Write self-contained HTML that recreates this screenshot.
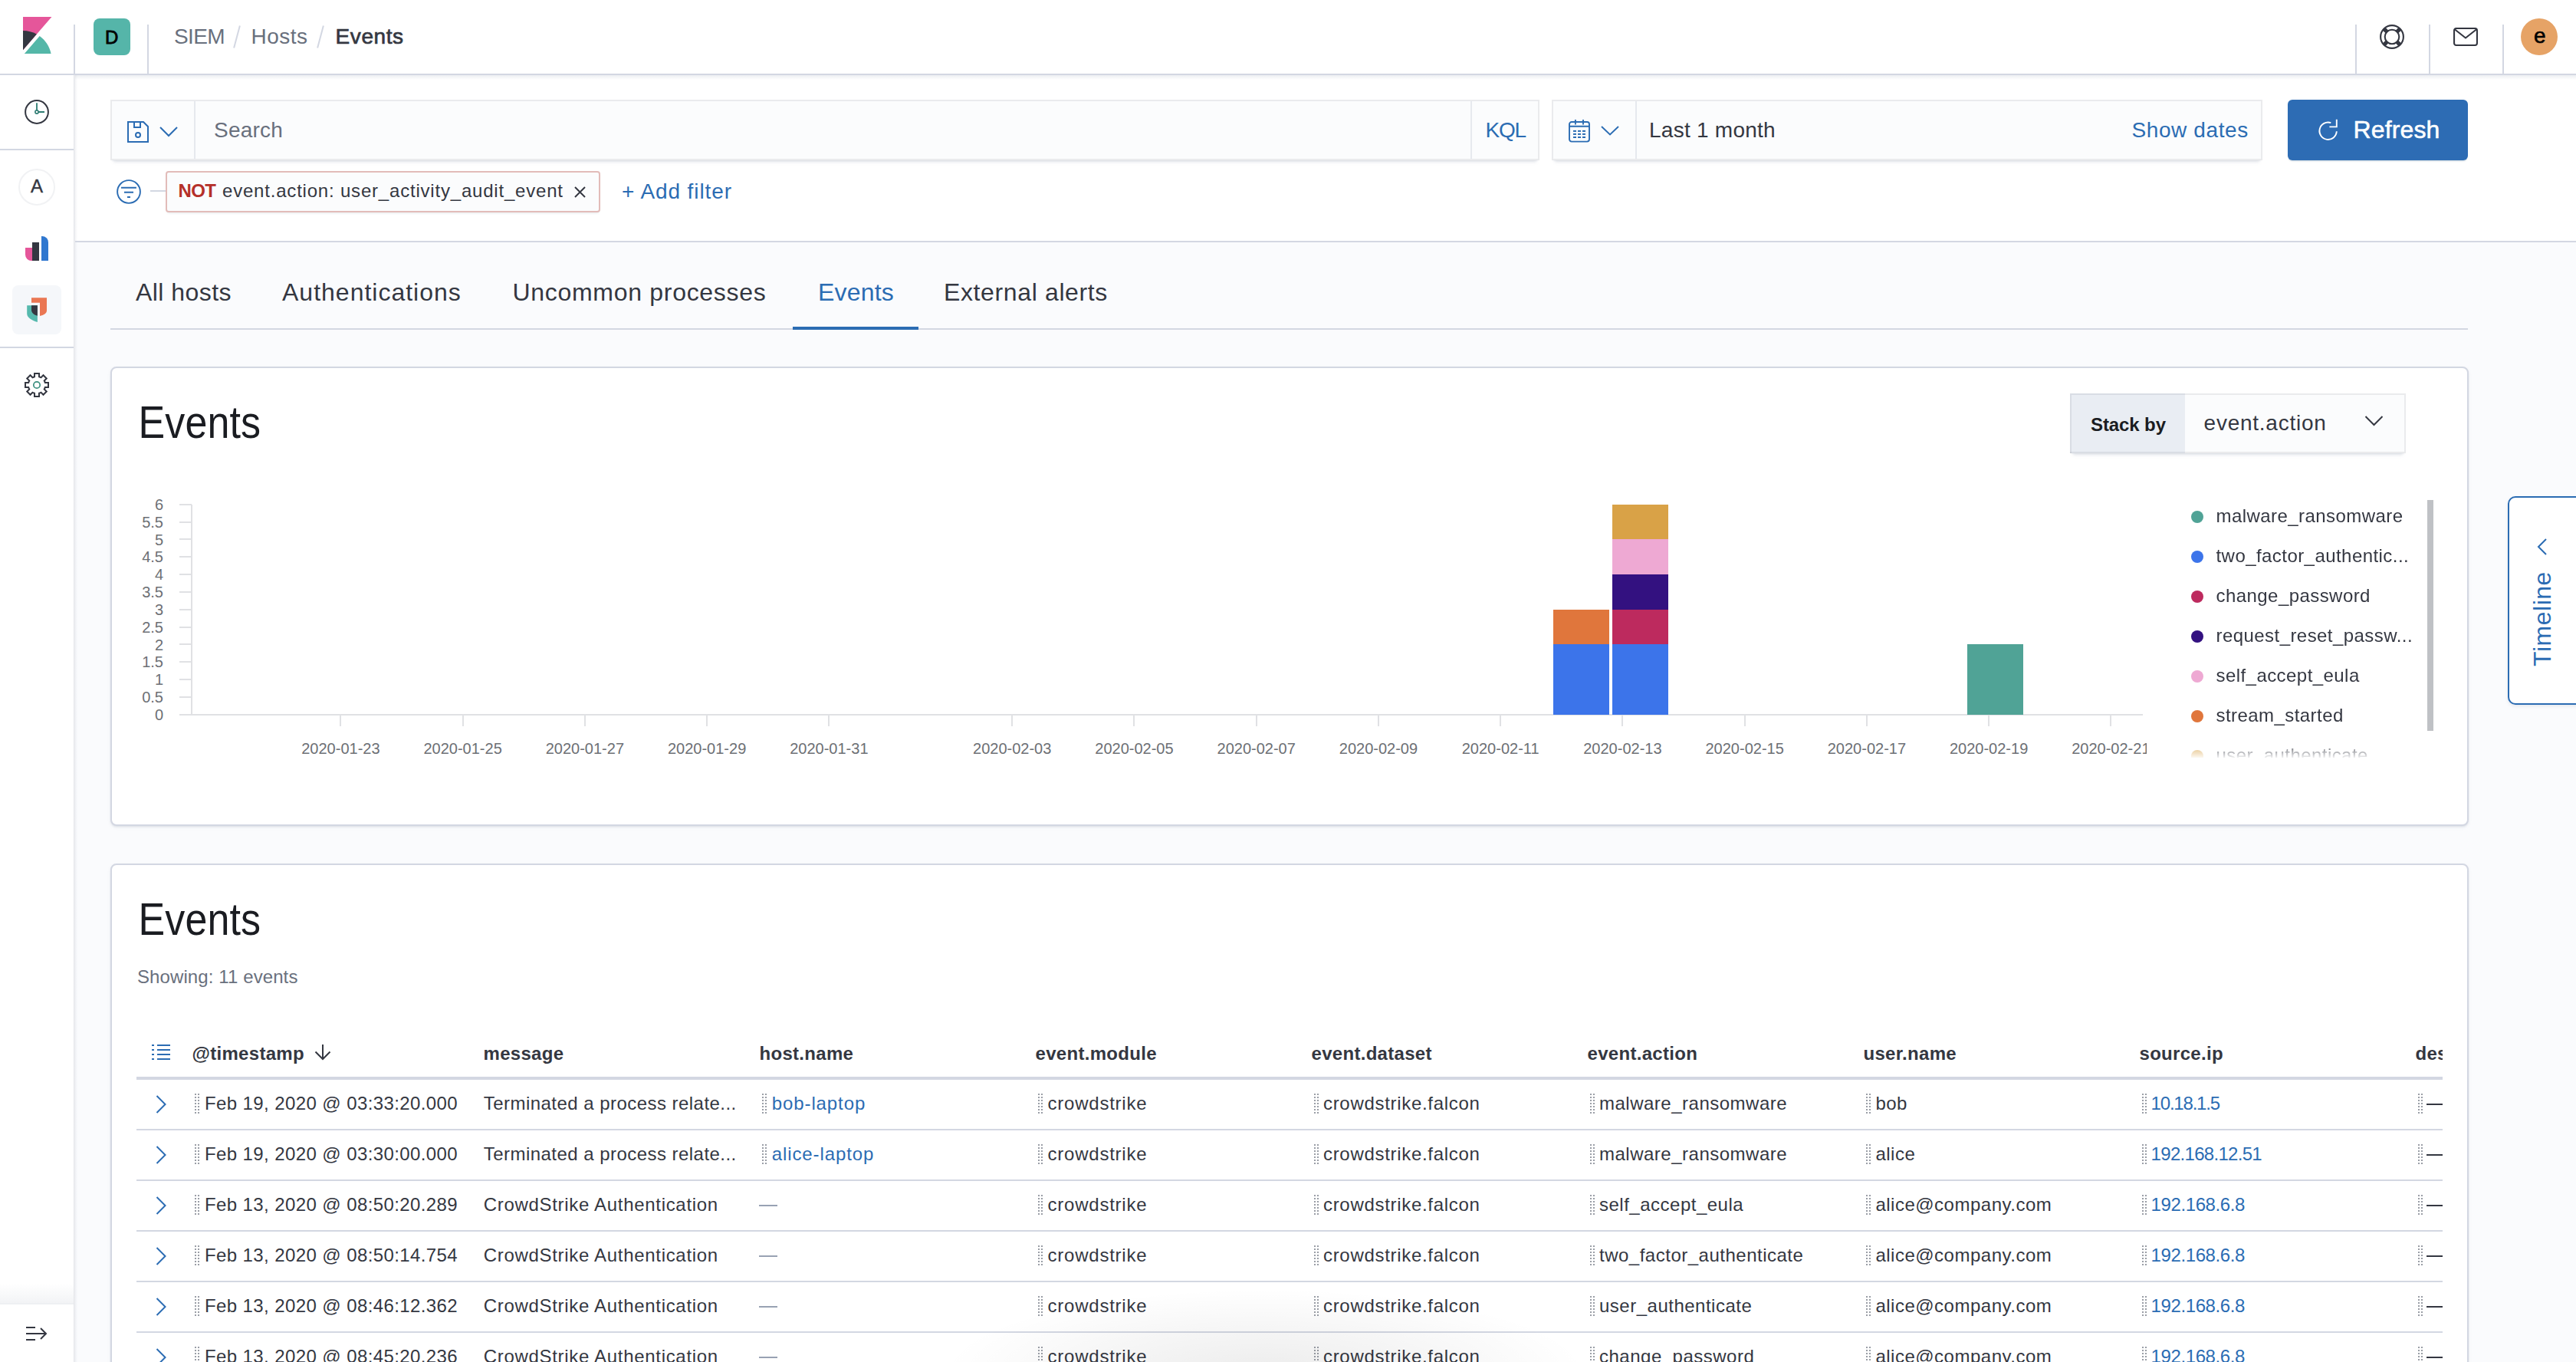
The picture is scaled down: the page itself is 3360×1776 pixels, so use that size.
<!DOCTYPE html>
<html><head><meta charset="utf-8"><title>Events - SIEM</title>
<style>
html,body{margin:0;padding:0;width:3360px;height:1776px;overflow:hidden;background:#fff;position:relative}
body{font-family:"Liberation Sans", sans-serif;}
.t{position:absolute;line-height:1;white-space:nowrap}
svg{overflow:visible}
@media (max-width:1700px){html{zoom:0.5}}
</style></head><body>
<div style="position:absolute;left:98.00px;top:314.00px;width:3262.00px;height:1462.00px;background:#FAFBFD"></div>
<div style="position:absolute;left:0.00px;top:0.00px;width:3360.00px;height:96.00px;background:#fff"></div>
<div style="position:absolute;left:0.00px;top:96.00px;width:3360.00px;height:2.00px;background:#D3D7E2"></div>
<div style="position:absolute;left:98.00px;top:98.00px;width:3262.00px;height:6.00px;background:linear-gradient(rgba(152,162,179,0.18),rgba(152,162,179,0))"></div>
<div style="position:absolute;left:96.00px;top:32.00px;width:2.00px;height:64.00px;background:#D3D7E2"></div>
<div style="position:absolute;left:192.00px;top:32.00px;width:2.00px;height:64.00px;background:#D3D7E2"></div>
<div style="position:absolute;left:3072.00px;top:32.00px;width:2.00px;height:64.00px;background:#D3D7E2"></div>
<div style="position:absolute;left:3168.00px;top:32.00px;width:2.00px;height:64.00px;background:#D3D7E2"></div>
<div style="position:absolute;left:3264.00px;top:32.00px;width:2.00px;height:64.00px;background:#D3D7E2"></div>
<svg style="position:absolute;left:24.00px;top:22.00px;" width="48" height="48" viewBox="0 0 32 32"><path fill="#E5569A" d="M4 0v28.789L28.935.017z"/><path fill="#343741" d="M4 12v16.789l11.906-13.738A24.721 24.721 0 0 0 4 12"/><path fill="#54B7A8" d="M18.479 16.664L6.268 30.754l-1.073 1.237h23.191c-1.252-6.292-4.883-11.719-9.908-15.327"/></svg>
<div style="position:absolute;left:122.00px;top:24.00px;width:48.00px;height:48.00px;background:#55B5A9;border-radius:8px"></div>
<div class="t" style="left:137.00px;top:36.68px;font-size:24px;color:#000;font-weight:400;letter-spacing:0px;-webkit-text-stroke:0.8px #000">D</div>
<div class="t" style="left:227.00px;top:34.30px;font-size:28px;color:#69707D;font-weight:400;letter-spacing:-0.6px;">SIEM</div>
<div style="position:absolute;left:308.00px;top:33.00px;width:2.00px;height:30.00px;background:#D3D7E2;transform:rotate(15deg)"></div>
<div class="t" style="left:327.50px;top:34.30px;font-size:28px;color:#69707D;font-weight:400;letter-spacing:0.5px;">Hosts</div>
<div style="position:absolute;left:417.00px;top:33.00px;width:2.00px;height:30.00px;background:#D3D7E2;transform:rotate(15deg)"></div>
<div class="t" style="left:437.50px;top:34.30px;font-size:28px;color:#343741;font-weight:400;letter-spacing:0.6px;-webkit-text-stroke:0.7px #343741">Events</div>
<svg style="position:absolute;left:3104.00px;top:32.00px;" width="32" height="32" viewBox="0 0 32 32"><g fill="none" stroke="#343741" stroke-width="2.1"><circle cx="16" cy="16" r="14.9"/><circle cx="16" cy="16" r="9.3"/></g><g stroke="#343741" stroke-width="5.2" fill="none"><path d="M5.6 5.6l4.4 4.4M26.4 5.6l-4.4 4.4M5.6 26.4l4.4-4.4M26.4 26.4l-4.4-4.4"/></g></svg>
<svg style="position:absolute;left:3200.00px;top:36.00px;" width="32" height="24" viewBox="0 0 32 24"><g fill="none" stroke="#343741" stroke-width="2.1"><rect x="1.05" y="1.05" width="29.9" height="21.9" rx="2.6"/><path d="M1.8 2.2l14.2 11.3 14.2-11.3"/></g></svg>
<div style="position:absolute;left:3288.00px;top:24.00px;width:48.00px;height:48.00px;background:#E6A366;border-radius:50%"></div>
<div class="t" style="left:3305.00px;top:33.30px;font-size:28px;color:#000;font-weight:400;letter-spacing:0px;-webkit-text-stroke:0.6px #000">e</div>
<div style="position:absolute;left:0.00px;top:98.00px;width:96.00px;height:1678.00px;background:#fff"></div>
<div style="position:absolute;left:96.00px;top:98.00px;width:5.00px;height:1678.00px;background:linear-gradient(90deg,rgba(140,146,165,0.25),rgba(140,146,165,0.09) 50%,rgba(140,146,165,0))"></div>
<div style="position:absolute;left:0.00px;top:194.00px;width:96.00px;height:2.00px;background:#D3D7E2"></div>
<div style="position:absolute;left:0.00px;top:452.00px;width:96.00px;height:2.00px;background:#D3D7E2"></div>
<svg style="position:absolute;left:32.00px;top:130.00px;" width="32" height="32" viewBox="0 0 32 32"><circle cx="16" cy="16" r="14.9" fill="none" stroke="#343741" stroke-width="2"/><path d="M16 4.3v9.8M18 16h8" stroke="#2F7D73" stroke-width="1.8" fill="none"/><circle cx="16" cy="16" r="2.1" fill="#fff" stroke="#2F7D73" stroke-width="1.6"/></svg>
<div style="position:absolute;left:24.00px;top:220.00px;width:48.00px;height:48.00px;background:#fff;border:2px solid #F1F2F4;border-radius:50%;box-sizing:border-box"></div>
<div class="t" style="left:40.00px;top:231.48px;font-size:24px;color:#343741;font-weight:400;letter-spacing:0px;-webkit-text-stroke:0.4px #343741">A</div>
<svg style="position:absolute;left:32.00px;top:307.00px;" width="32" height="34" viewBox="0 0 32 34"><path fill="#E5569A" d="M1 16h9v17H9a8 8 0 0 1-8-8z"/><rect fill="#343741" x="10" y="9" width="9" height="24"/><path fill="#2F77CF" d="M22 1h1a8 8 0 0 1 8 8v24h-9z"/></svg>
<div style="position:absolute;left:16.00px;top:372.00px;width:64.00px;height:64.00px;background:#F5F7FA;border-radius:8px"></div>
<svg style="position:absolute;left:30.00px;top:383.00px;" width="36" height="42" viewBox="30 383 36 42"><path fill="#EA7753" d="M41 388.2H61V405C61 408.5 57 411 52 412V394.7H41Z"/><path fill="#55B9AD" d="M35.2 398.2H48.9V420C42 418 35.2 414.5 35.2 409Z"/><path fill="#343741" d="M41 398.2H48.9V411.7C44.5 410.8 41 408 41 404Z"/></svg>
<svg style="position:absolute;left:32.00px;top:486.00px;" width="32" height="32" viewBox="0 0 32 32"><path fill="none" stroke="#343741" stroke-width="2" stroke-linejoin="miter" d="M13.00 5.21L13.00 1.00L19.00 1.00L19.00 5.21A11.2 11.2 0 0 1 21.51 6.25L24.49 3.27L28.73 7.51L25.75 10.49A11.2 11.2 0 0 1 26.79 13.00L31.00 13.00L31.00 19.00L26.79 19.00A11.2 11.2 0 0 1 25.75 21.51L28.73 24.49L24.49 28.73L21.51 25.75A11.2 11.2 0 0 1 19.00 26.79L19.00 31.00L13.00 31.00L13.00 26.79A11.2 11.2 0 0 1 10.49 25.75L7.51 28.73L3.27 24.49L6.25 21.51A11.2 11.2 0 0 1 5.21 19.00L1.00 19.00L1.00 13.00L5.21 13.00A11.2 11.2 0 0 1 6.25 10.49L3.27 7.51L7.51 3.27L10.49 6.25Z"/><circle cx="16" cy="16" r="4.2" fill="none" stroke="#3B8F7F" stroke-width="1.7"/></svg>
<div style="position:absolute;left:0.00px;top:1674.00px;width:96.00px;height:26.00px;background:linear-gradient(rgba(152,162,179,0),rgba(152,162,179,0.13))"></div>
<div style="position:absolute;left:0.00px;top:1699.00px;width:96.00px;height:2.00px;#EEF0F3;background:#EEF0F3"></div>
<svg style="position:absolute;left:34.00px;top:1729.00px;" width="28" height="20" viewBox="0 0 28 20"><g fill="none" stroke="#343741" stroke-width="2"><path d="M0 2h12M0 10h26M0 18h12M19 3l7 7-7 7"/></g></svg>
<div style="position:absolute;left:144.00px;top:130.00px;width:1864.00px;height:79.00px;background:#FBFCFD;box-shadow:inset 0 0 0 2px rgba(32,38,47,0.08),0 2px 2px -2px rgba(152,162,179,0.3),0 6px 4px -4px rgba(152,162,179,0.3)"></div>
<div style="position:absolute;left:253.00px;top:132.00px;width:2.00px;height:75.00px;background:#E6E9EE"></div>
<div style="position:absolute;left:1918.00px;top:132.00px;width:2.00px;height:75.00px;background:#E6E9EE"></div>
<svg style="position:absolute;left:166.00px;top:158.00px;" width="28" height="28" viewBox="0 0 28 28"><g fill="none" stroke="#2B6CB3" stroke-width="2"><path d="M1 1h20l6 6v20H1z"/><path d="M9 1v7h8V1"/><circle cx="14" cy="18" r="3"/></g></svg>
<svg style="position:absolute;left:208.00px;top:165.00px;" width="24" height="14" viewBox="0 0 24 14"><path d="M1 1l11 11 11-11" fill="none" stroke="#2B6CB3" stroke-width="2"/></svg>
<div class="t" style="left:279.00px;top:155.80px;font-size:28px;color:#69707D;font-weight:400;letter-spacing:0.2px;">Search</div>
<div class="t" style="left:1937.50px;top:156.30px;font-size:28px;color:#2B6CB3;font-weight:400;letter-spacing:-1.2px;">KQL</div>
<div style="position:absolute;left:2024.00px;top:130.00px;width:927.00px;height:79.00px;background:#FBFCFD;box-shadow:inset 0 0 0 2px rgba(32,38,47,0.08),0 2px 2px -2px rgba(152,162,179,0.3),0 6px 4px -4px rgba(152,162,179,0.3)"></div>
<div style="position:absolute;left:2133.00px;top:132.00px;width:2.00px;height:75.00px;background:#E6E9EE"></div>
<svg style="position:absolute;left:2046.00px;top:156.00px;" width="28" height="30" viewBox="0 0 28 30"><g fill="none" stroke="#2B6CB3" stroke-width="1.9"><rect x="1" y="3" width="26" height="25.6" rx="3"/><path d="M1 8.8h26M8.9 0v6.6M19 0v6.6"/></g><g fill="#2B6CB3"><rect x="6" y="13.9" width="4" height="2"/><rect x="12" y="13.9" width="4" height="2"/><rect x="18" y="13.9" width="4" height="2"/><rect x="6" y="17.9" width="4" height="2"/><rect x="12" y="17.9" width="4" height="2"/><rect x="18" y="17.9" width="4" height="2"/><rect x="6" y="22" width="4" height="2"/><rect x="12" y="22" width="4" height="2"/><rect x="18" y="22" width="4" height="2"/></g></svg>
<svg style="position:absolute;left:2088.00px;top:164.00px;" width="24" height="13" viewBox="0 0 24 13"><path d="M1 1l11 10.5 11-10.5" fill="none" stroke="#2B6CB3" stroke-width="1.9"/></svg>
<div class="t" style="left:2151.00px;top:156.30px;font-size:28px;color:#343741;font-weight:400;letter-spacing:0.25px;">Last 1 month</div>
<div class="t" style="left:2780.50px;top:156.30px;font-size:28px;color:#2B6CB3;font-weight:400;letter-spacing:0.6px;">Show dates</div>
<div style="position:absolute;left:2984.00px;top:130.00px;width:235.00px;height:79.00px;background:#2D6CB4;border-radius:6px;box-shadow:0 2px 2px -1px rgba(54,97,126,0.3)"></div>
<svg style="position:absolute;left:3024.00px;top:155.00px;" width="26" height="28" viewBox="0 0 26 28"><g fill="none" stroke="#fff" stroke-width="1.9"><path d="M16.3 5.2A11.2 11.2 0 1 0 23.8 16.3"/><path d="M23.8 0.8V10.4H14.4" stroke-linejoin="miter"/></g></svg>
<div class="t" style="left:3069.50px;top:152.91px;font-size:32px;color:#fff;font-weight:400;letter-spacing:0.13px;-webkit-text-stroke:0.55px #fff">Refresh</div>
<svg style="position:absolute;left:152.00px;top:234.00px;" width="32" height="32" viewBox="0 0 32 32"><g fill="none" stroke="#2B6CB3" stroke-width="1.9"><circle cx="16" cy="16" r="14.9"/><path d="M6 10.8h19.9M10 16.7h12M14 23h4"/></g></svg>
<div style="position:absolute;left:196.00px;top:248.00px;width:21.00px;height:2.00px;background:#D3D7E2"></div>
<div style="position:absolute;left:216.00px;top:222.50px;width:567.00px;height:54.00px;background:#FBFCFD;border:2px solid #E2BCB9;border-radius:4px;box-sizing:border-box;box-shadow:0 3px 3px -2px rgba(152,162,179,0.25)"></div>
<div class="t" style="left:232.50px;top:237.18px;font-size:24px;color:#B5302A;font-weight:700;letter-spacing:-0.6px;">NOT</div>
<div class="t" style="left:290.00px;top:237.18px;font-size:24px;color:#343741;font-weight:400;letter-spacing:0.8px;">event.action: user_activity_audit_event</div>
<svg style="position:absolute;left:749.00px;top:243.00px;" width="15" height="15" viewBox="0 0 15 15"><path d="M1 1l13 13M14 1L1 14" stroke="#343741" stroke-width="2" fill="none"/></svg>
<div class="t" style="left:811.00px;top:236.10px;font-size:28px;color:#2B6CB3;font-weight:400;letter-spacing:0.9px;">+ Add filter</div>
<div style="position:absolute;left:98.00px;top:98.00px;width:3262.00px;height:216.00px;background:#fff;z-index:-1"></div>
<div style="position:absolute;left:98.00px;top:314.00px;width:3262.00px;height:2.00px;background:#D3D7E2"></div>
<div style="position:absolute;left:144.00px;top:428.00px;width:3075.00px;height:2.00px;background:#D3D7E2"></div>
<div class="t" style="left:177.00px;top:365.41px;font-size:32px;color:#343741;font-weight:400;letter-spacing:0.45px;">All hosts</div>
<div class="t" style="left:368.00px;top:365.41px;font-size:32px;color:#343741;font-weight:400;letter-spacing:1.0px;">Authentications</div>
<div class="t" style="left:668.50px;top:365.41px;font-size:32px;color:#343741;font-weight:400;letter-spacing:0.7px;">Uncommon processes</div>
<div class="t" style="left:1067.00px;top:365.41px;font-size:32px;color:#2B6CB3;font-weight:400;letter-spacing:0.2px;">Events</div>
<div class="t" style="left:1231.00px;top:365.41px;font-size:32px;color:#343741;font-weight:400;letter-spacing:0.63px;">External alerts</div>
<div style="position:absolute;left:1034.00px;top:426.00px;width:164.00px;height:4.00px;background:#2B6CB3"></div>
<div style="position:absolute;left:144.00px;top:478.00px;width:3076.00px;height:599.00px;background:#fff;border:2px solid #D3D7E2;border-radius:8px;box-sizing:border-box;box-shadow:0 2px 4px -1px rgba(152,162,179,0.25),0 1px 2px rgba(152,162,179,0.15)"></div>
<div class="t" style="left:180.50px;top:527.48px;font-size:52px;color:#1A1C21;font-weight:400;letter-spacing:0.1px;transform-origin:0 44px;transform:scaleY(1.14)">Events</div>
<div style="position:absolute;left:2700.00px;top:513.00px;width:438.00px;height:78.00px;background:#FBFCFD;box-shadow:inset 0 0 0 2px rgba(32,38,47,0.08),0 2px 2px -2px rgba(152,162,179,0.3),0 6px 4px -4px rgba(152,162,179,0.3)"></div>
<div style="position:absolute;left:2700.00px;top:513.00px;width:150.00px;height:78.00px;background:#E9EDF3;box-shadow:inset 2px 2px 0 rgba(32,38,47,0.08),inset 0 -2px 0 rgba(32,38,47,0.08)"></div>
<div class="t" style="left:2727.00px;top:541.68px;font-size:24px;color:#1A1C21;font-weight:700;letter-spacing:-0.1px;">Stack by</div>
<div class="t" style="left:2874.60px;top:538.30px;font-size:28px;color:#343741;font-weight:400;letter-spacing:0.75px;">event.action</div>
<svg style="position:absolute;left:3084.00px;top:542.00px;" width="25" height="14" viewBox="0 0 24 14"><path d="M1 1l11 11 11-11" fill="none" stroke="#343741" stroke-width="2"/></svg>
<div style="position:absolute;left:249.00px;top:657.70px;width:2.00px;height:275.00px;background:#E0E1E4"></div>
<div style="position:absolute;left:234.00px;top:930.70px;width:2561.00px;height:2.00px;background:#E0E1E4"></div>
<div style="position:absolute;left:234.00px;top:930.70px;width:16.00px;height:2.00px;background:#E0E1E4"></div>
<div class="t" style="left:113px;width:100px;text-align:right;top:921.97px;font-size:20px;color:#6D7075">0</div>
<div style="position:absolute;left:234.00px;top:907.87px;width:16.00px;height:2.00px;background:#E0E1E4"></div>
<div class="t" style="left:113px;width:100px;text-align:right;top:899.14px;font-size:20px;color:#6D7075">0.5</div>
<div style="position:absolute;left:234.00px;top:885.03px;width:16.00px;height:2.00px;background:#E0E1E4"></div>
<div class="t" style="left:113px;width:100px;text-align:right;top:876.30px;font-size:20px;color:#6D7075">1</div>
<div style="position:absolute;left:234.00px;top:862.20px;width:16.00px;height:2.00px;background:#E0E1E4"></div>
<div class="t" style="left:113px;width:100px;text-align:right;top:853.47px;font-size:20px;color:#6D7075">1.5</div>
<div style="position:absolute;left:234.00px;top:839.37px;width:16.00px;height:2.00px;background:#E0E1E4"></div>
<div class="t" style="left:113px;width:100px;text-align:right;top:830.64px;font-size:20px;color:#6D7075">2</div>
<div style="position:absolute;left:234.00px;top:816.53px;width:16.00px;height:2.00px;background:#E0E1E4"></div>
<div class="t" style="left:113px;width:100px;text-align:right;top:807.80px;font-size:20px;color:#6D7075">2.5</div>
<div style="position:absolute;left:234.00px;top:793.70px;width:16.00px;height:2.00px;background:#E0E1E4"></div>
<div class="t" style="left:113px;width:100px;text-align:right;top:784.97px;font-size:20px;color:#6D7075">3</div>
<div style="position:absolute;left:234.00px;top:770.87px;width:16.00px;height:2.00px;background:#E0E1E4"></div>
<div class="t" style="left:113px;width:100px;text-align:right;top:762.14px;font-size:20px;color:#6D7075">3.5</div>
<div style="position:absolute;left:234.00px;top:748.03px;width:16.00px;height:2.00px;background:#E0E1E4"></div>
<div class="t" style="left:113px;width:100px;text-align:right;top:739.30px;font-size:20px;color:#6D7075">4</div>
<div style="position:absolute;left:234.00px;top:725.20px;width:16.00px;height:2.00px;background:#E0E1E4"></div>
<div class="t" style="left:113px;width:100px;text-align:right;top:716.47px;font-size:20px;color:#6D7075">4.5</div>
<div style="position:absolute;left:234.00px;top:702.37px;width:16.00px;height:2.00px;background:#E0E1E4"></div>
<div class="t" style="left:113px;width:100px;text-align:right;top:693.64px;font-size:20px;color:#6D7075">5</div>
<div style="position:absolute;left:234.00px;top:679.53px;width:16.00px;height:2.00px;background:#E0E1E4"></div>
<div class="t" style="left:113px;width:100px;text-align:right;top:670.80px;font-size:20px;color:#6D7075">5.5</div>
<div style="position:absolute;left:234.00px;top:656.70px;width:16.00px;height:2.00px;background:#E0E1E4"></div>
<div class="t" style="left:113px;width:100px;text-align:right;top:647.97px;font-size:20px;color:#6D7075">6</div>
<div style="position:absolute;left:443.40px;top:931.70px;width:2.00px;height:15.00px;background:#E0E1E4"></div>
<div class="t" style="left:364.40px;width:160px;text-align:center;top:966.37px;font-size:20px;color:#6D7075;clip-path:inset(0 0.00px 0 0)">2020-01-23</div>
<div style="position:absolute;left:602.64px;top:931.70px;width:2.00px;height:15.00px;background:#E0E1E4"></div>
<div class="t" style="left:523.64px;width:160px;text-align:center;top:966.37px;font-size:20px;color:#6D7075;clip-path:inset(0 0.00px 0 0)">2020-01-25</div>
<div style="position:absolute;left:761.88px;top:931.70px;width:2.00px;height:15.00px;background:#E0E1E4"></div>
<div class="t" style="left:682.88px;width:160px;text-align:center;top:966.37px;font-size:20px;color:#6D7075;clip-path:inset(0 0.00px 0 0)">2020-01-27</div>
<div style="position:absolute;left:921.12px;top:931.70px;width:2.00px;height:15.00px;background:#E0E1E4"></div>
<div class="t" style="left:842.12px;width:160px;text-align:center;top:966.37px;font-size:20px;color:#6D7075;clip-path:inset(0 0.00px 0 0)">2020-01-29</div>
<div style="position:absolute;left:1080.36px;top:931.70px;width:2.00px;height:15.00px;background:#E0E1E4"></div>
<div class="t" style="left:1001.36px;width:160px;text-align:center;top:966.37px;font-size:20px;color:#6D7075;clip-path:inset(0 0.00px 0 0)">2020-01-31</div>
<div style="position:absolute;left:1319.22px;top:931.70px;width:2.00px;height:15.00px;background:#E0E1E4"></div>
<div class="t" style="left:1240.22px;width:160px;text-align:center;top:966.37px;font-size:20px;color:#6D7075;clip-path:inset(0 0.00px 0 0)">2020-02-03</div>
<div style="position:absolute;left:1478.46px;top:931.70px;width:2.00px;height:15.00px;background:#E0E1E4"></div>
<div class="t" style="left:1399.46px;width:160px;text-align:center;top:966.37px;font-size:20px;color:#6D7075;clip-path:inset(0 0.00px 0 0)">2020-02-05</div>
<div style="position:absolute;left:1637.70px;top:931.70px;width:2.00px;height:15.00px;background:#E0E1E4"></div>
<div class="t" style="left:1558.70px;width:160px;text-align:center;top:966.37px;font-size:20px;color:#6D7075;clip-path:inset(0 0.00px 0 0)">2020-02-07</div>
<div style="position:absolute;left:1796.94px;top:931.70px;width:2.00px;height:15.00px;background:#E0E1E4"></div>
<div class="t" style="left:1717.94px;width:160px;text-align:center;top:966.37px;font-size:20px;color:#6D7075;clip-path:inset(0 0.00px 0 0)">2020-02-09</div>
<div style="position:absolute;left:1956.18px;top:931.70px;width:2.00px;height:15.00px;background:#E0E1E4"></div>
<div class="t" style="left:1877.18px;width:160px;text-align:center;top:966.37px;font-size:20px;color:#6D7075;clip-path:inset(0 0.00px 0 0)">2020-02-11</div>
<div style="position:absolute;left:2115.42px;top:931.70px;width:2.00px;height:15.00px;background:#E0E1E4"></div>
<div class="t" style="left:2036.42px;width:160px;text-align:center;top:966.37px;font-size:20px;color:#6D7075;clip-path:inset(0 0.00px 0 0)">2020-02-13</div>
<div style="position:absolute;left:2274.66px;top:931.70px;width:2.00px;height:15.00px;background:#E0E1E4"></div>
<div class="t" style="left:2195.66px;width:160px;text-align:center;top:966.37px;font-size:20px;color:#6D7075;clip-path:inset(0 0.00px 0 0)">2020-02-15</div>
<div style="position:absolute;left:2433.90px;top:931.70px;width:2.00px;height:15.00px;background:#E0E1E4"></div>
<div class="t" style="left:2354.90px;width:160px;text-align:center;top:966.37px;font-size:20px;color:#6D7075;clip-path:inset(0 0.00px 0 0)">2020-02-17</div>
<div style="position:absolute;left:2593.14px;top:931.70px;width:2.00px;height:15.00px;background:#E0E1E4"></div>
<div class="t" style="left:2514.14px;width:160px;text-align:center;top:966.37px;font-size:20px;color:#6D7075;clip-path:inset(0 0.00px 0 0)">2020-02-19</div>
<div style="position:absolute;left:2752.38px;top:931.70px;width:2.00px;height:15.00px;background:#E0E1E4"></div>
<div class="t" style="left:2673.38px;width:160px;text-align:center;top:966.37px;font-size:20px;color:#6D7075;clip-path:inset(0 33.38px 0 0)">2020-02-21</div>
<div style="position:absolute;left:2025.80px;top:840.37px;width:73.00px;height:91.33px;background:#3C74EA"></div>
<div style="position:absolute;left:2025.80px;top:794.70px;width:73.00px;height:45.67px;background:#E0763C"></div>
<div style="position:absolute;left:2103.00px;top:840.37px;width:73.00px;height:91.33px;background:#3C74EA"></div>
<div style="position:absolute;left:2103.00px;top:794.70px;width:73.00px;height:45.67px;background:#BD2A5E"></div>
<div style="position:absolute;left:2103.00px;top:749.03px;width:73.00px;height:45.67px;background:#331180"></div>
<div style="position:absolute;left:2103.00px;top:703.37px;width:73.00px;height:45.67px;background:#EEA9D3"></div>
<div style="position:absolute;left:2103.00px;top:657.70px;width:73.00px;height:45.67px;background:#D9A247"></div>
<div style="position:absolute;left:2565.60px;top:840.37px;width:73.00px;height:91.33px;background:#50A396"></div>
<div style="position:absolute;left:2840px;top:640px;width:320px;height:348px;overflow:hidden;-webkit-mask-image:linear-gradient(#000 0,#000 326px,rgba(0,0,0,0.08) 348px)">
<div style="position:absolute;left:18px;top:25.80px;width:16px;height:16px;border-radius:50%;background:#50A396"></div>
<div class="t" style="left:50.50px;top:21.48px;font-size:24px;color:#343741;letter-spacing:0.44px">malware_ransomware</div>
<div style="position:absolute;left:18px;top:77.80px;width:16px;height:16px;border-radius:50%;background:#3C74EA"></div>
<div class="t" style="left:50.50px;top:73.48px;font-size:24px;color:#343741;letter-spacing:0.44px">two_factor_authentic...</div>
<div style="position:absolute;left:18px;top:129.80px;width:16px;height:16px;border-radius:50%;background:#BD2A5E"></div>
<div class="t" style="left:50.50px;top:125.48px;font-size:24px;color:#343741;letter-spacing:0.44px">change_password</div>
<div style="position:absolute;left:18px;top:181.80px;width:16px;height:16px;border-radius:50%;background:#331180"></div>
<div class="t" style="left:50.50px;top:177.48px;font-size:24px;color:#343741;letter-spacing:0.44px">request_reset_passw...</div>
<div style="position:absolute;left:18px;top:233.80px;width:16px;height:16px;border-radius:50%;background:#EEA9D3"></div>
<div class="t" style="left:50.50px;top:229.48px;font-size:24px;color:#343741;letter-spacing:0.44px">self_accept_eula</div>
<div style="position:absolute;left:18px;top:285.80px;width:16px;height:16px;border-radius:50%;background:#E0763C"></div>
<div class="t" style="left:50.50px;top:281.48px;font-size:24px;color:#343741;letter-spacing:0.44px">stream_started</div>
<div style="position:absolute;left:18px;top:337.80px;width:16px;height:16px;border-radius:50%;background:#D9A247"></div>
<div class="t" style="left:50.50px;top:333.48px;font-size:24px;color:#343741;letter-spacing:0.44px">user_authenticate</div>
</div>
<div style="position:absolute;left:3166.00px;top:652.00px;width:8.00px;height:301.00px;background:#BFC1C5"></div>
<div style="position:absolute;left:3271.00px;top:647.00px;width:120.00px;height:272.00px;background:#fff;border:2px solid #2B6CB3;border-radius:10px;box-sizing:border-box;box-shadow:0 2px 4px rgba(152,162,179,0.2)"></div>
<svg style="position:absolute;left:3309.00px;top:702.00px;" width="14" height="22" viewBox="0 0 14 22"><path d="M12 1L2 11l10 10" fill="none" stroke="#2B6CB3" stroke-width="2"/></svg>
<div class="t" style="left:3252.50px;top:791.00px;width:125px;height:32px;line-height:32px;text-align:center;font-size:32px;color:#2B6CB3;transform:rotate(-90deg);letter-spacing:0.5px">Timeline</div>
<div style="position:absolute;left:144.00px;top:1126.00px;width:3076.00px;height:700.00px;background:#fff;border:2px solid #D3D7E2;border-radius:8px;box-sizing:border-box;box-shadow:0 2px 4px -1px rgba(152,162,179,0.25),0 1px 2px rgba(152,162,179,0.15)"></div>
<div class="t" style="left:180.50px;top:1174.98px;font-size:52px;color:#1A1C21;font-weight:400;letter-spacing:0.1px;transform-origin:0 44px;transform:scaleY(1.14)">Events</div>
<div class="t" style="left:179.00px;top:1261.68px;font-size:24px;color:#69707D;font-weight:400;letter-spacing:0.1px;">Showing: 11 events</div>
<svg style="position:absolute;left:198.00px;top:1362.00px;" width="24" height="20" viewBox="0 0 24 20"><g fill="#2B6CB3"><rect x="0" y="0" width="3" height="2"/><rect x="0" y="6" width="3" height="2"/><rect x="0" y="12" width="3" height="2"/><rect x="0" y="18" width="3" height="2"/><rect x="7" y="0" width="17" height="2"/><rect x="7" y="6" width="17" height="2"/><rect x="7" y="12" width="17" height="2"/><rect x="7" y="18" width="17" height="2"/></g></svg>
<div style="position:absolute;left:178px;top:1330px;width:3008px;height:446px;overflow:hidden">
<div class="t" style="left:72.50px;top:31.68px;font-size:24px;color:#343741;font-weight:700;letter-spacing:0.3px">@timestamp</div>
<div class="t" style="left:452.50px;top:31.68px;font-size:24px;color:#343741;font-weight:700;letter-spacing:0.3px">message</div>
<div class="t" style="left:812.50px;top:31.68px;font-size:24px;color:#343741;font-weight:700;letter-spacing:0.3px">host.name</div>
<div class="t" style="left:1172.50px;top:31.68px;font-size:24px;color:#343741;font-weight:700;letter-spacing:0.3px">event.module</div>
<div class="t" style="left:1532.50px;top:31.68px;font-size:24px;color:#343741;font-weight:700;letter-spacing:0.3px">event.dataset</div>
<div class="t" style="left:1892.50px;top:31.68px;font-size:24px;color:#343741;font-weight:700;letter-spacing:0.3px">event.action</div>
<div class="t" style="left:2252.50px;top:31.68px;font-size:24px;color:#343741;font-weight:700;letter-spacing:0.3px">user.name</div>
<div class="t" style="left:2612.50px;top:31.68px;font-size:24px;color:#343741;font-weight:700;letter-spacing:0.3px">source.ip</div>
<div class="t" style="left:2972.50px;top:31.68px;font-size:24px;color:#343741;font-weight:700;letter-spacing:0.3px">destination.ip</div>
<svg style="position:absolute;left:232px;top:32px" width="22" height="20" viewBox="0 0 22 20"><path d="M11 0v19M1.5 9.5l9.5 9.5 9.5-9.5" fill="none" stroke="#343741" stroke-width="2"/></svg>
<div style="position:absolute;left:0.00px;top:74.00px;width:3008.00px;height:4.00px;background:#D3D7E2"></div>
<div style="position:absolute;left:0.00px;top:142.00px;width:3008.00px;height:2.00px;background:#D3D7E2"></div>
<svg style="position:absolute;left:25px;top:98.00px" width="14" height="24" viewBox="0 0 14 24"><path d="M1.5 1l11 11-11 11" fill="none" stroke="#2B6CB3" stroke-width="2"/></svg>
<div style="position:absolute;left:76.00px;top:96.00px;width:6.00px;height:26.00px;background:repeating-linear-gradient(90deg,#9A9EA6 0 2px,transparent 2px 4px);-webkit-mask-image:repeating-linear-gradient(#000 0 2px,transparent 2px 4px)"></div>
<div class="t" style="left:89.00px;top:97.28px;font-size:24px;color:#343741;font-weight:400;letter-spacing:0.4px">Feb 19, 2020 @ 03:33:20.000</div>
<div class="t" style="left:452.75px;top:97.28px;font-size:24px;color:#343741;font-weight:400;letter-spacing:0.46px">Terminated a process relate...</div>
<div style="position:absolute;left:816.00px;top:96.00px;width:6.00px;height:26.00px;background:repeating-linear-gradient(90deg,#9A9EA6 0 2px,transparent 2px 4px);-webkit-mask-image:repeating-linear-gradient(#000 0 2px,transparent 2px 4px)"></div>
<div class="t" style="left:828.75px;top:97.28px;font-size:24px;color:#2B6CB3;font-weight:400;letter-spacing:0.9px">bob-laptop</div>
<div style="position:absolute;left:1176.00px;top:96.00px;width:6.00px;height:26.00px;background:repeating-linear-gradient(90deg,#9A9EA6 0 2px,transparent 2px 4px);-webkit-mask-image:repeating-linear-gradient(#000 0 2px,transparent 2px 4px)"></div>
<div class="t" style="left:1188.60px;top:97.28px;font-size:24px;color:#343741;font-weight:400;letter-spacing:0.76px">crowdstrike</div>
<div style="position:absolute;left:1536.00px;top:96.00px;width:6.00px;height:26.00px;background:repeating-linear-gradient(90deg,#9A9EA6 0 2px,transparent 2px 4px);-webkit-mask-image:repeating-linear-gradient(#000 0 2px,transparent 2px 4px)"></div>
<div class="t" style="left:1548.00px;top:97.28px;font-size:24px;color:#343741;font-weight:400;letter-spacing:0.69px">crowdstrike.falcon</div>
<div style="position:absolute;left:1896.00px;top:96.00px;width:6.00px;height:26.00px;background:repeating-linear-gradient(90deg,#9A9EA6 0 2px,transparent 2px 4px);-webkit-mask-image:repeating-linear-gradient(#000 0 2px,transparent 2px 4px)"></div>
<div class="t" style="left:1908.00px;top:97.28px;font-size:24px;color:#343741;font-weight:400;letter-spacing:0.5px">malware_ransomware</div>
<div style="position:absolute;left:2256.00px;top:96.00px;width:6.00px;height:26.00px;background:repeating-linear-gradient(90deg,#9A9EA6 0 2px,transparent 2px 4px);-webkit-mask-image:repeating-linear-gradient(#000 0 2px,transparent 2px 4px)"></div>
<div class="t" style="left:2268.40px;top:97.28px;font-size:24px;color:#343741;font-weight:400;letter-spacing:0.5px">bob</div>
<div style="position:absolute;left:2616.00px;top:96.00px;width:6.00px;height:26.00px;background:repeating-linear-gradient(90deg,#9A9EA6 0 2px,transparent 2px 4px);-webkit-mask-image:repeating-linear-gradient(#000 0 2px,transparent 2px 4px)"></div>
<div class="t" style="left:2627.60px;top:97.28px;font-size:24px;color:#2B6CB3;font-weight:400;letter-spacing:-1.2px">10.18.1.5</div>
<div style="position:absolute;left:2976.00px;top:96.00px;width:6.00px;height:26.00px;background:repeating-linear-gradient(90deg,#9A9EA6 0 2px,transparent 2px 4px);-webkit-mask-image:repeating-linear-gradient(#000 0 2px,transparent 2px 4px)"></div>
<div style="position:absolute;left:2987.00px;top:109.00px;width:24.00px;height:2.00px;background:#343741"></div>
<div style="position:absolute;left:0.00px;top:208.00px;width:3008.00px;height:2.00px;background:#D3D7E2"></div>
<svg style="position:absolute;left:25px;top:164.00px" width="14" height="24" viewBox="0 0 14 24"><path d="M1.5 1l11 11-11 11" fill="none" stroke="#2B6CB3" stroke-width="2"/></svg>
<div style="position:absolute;left:76.00px;top:162.00px;width:6.00px;height:26.00px;background:repeating-linear-gradient(90deg,#9A9EA6 0 2px,transparent 2px 4px);-webkit-mask-image:repeating-linear-gradient(#000 0 2px,transparent 2px 4px)"></div>
<div class="t" style="left:89.00px;top:163.28px;font-size:24px;color:#343741;font-weight:400;letter-spacing:0.4px">Feb 19, 2020 @ 03:30:00.000</div>
<div class="t" style="left:452.75px;top:163.28px;font-size:24px;color:#343741;font-weight:400;letter-spacing:0.46px">Terminated a process relate...</div>
<div style="position:absolute;left:816.00px;top:162.00px;width:6.00px;height:26.00px;background:repeating-linear-gradient(90deg,#9A9EA6 0 2px,transparent 2px 4px);-webkit-mask-image:repeating-linear-gradient(#000 0 2px,transparent 2px 4px)"></div>
<div class="t" style="left:828.75px;top:163.28px;font-size:24px;color:#2B6CB3;font-weight:400;letter-spacing:0.9px">alice-laptop</div>
<div style="position:absolute;left:1176.00px;top:162.00px;width:6.00px;height:26.00px;background:repeating-linear-gradient(90deg,#9A9EA6 0 2px,transparent 2px 4px);-webkit-mask-image:repeating-linear-gradient(#000 0 2px,transparent 2px 4px)"></div>
<div class="t" style="left:1188.60px;top:163.28px;font-size:24px;color:#343741;font-weight:400;letter-spacing:0.76px">crowdstrike</div>
<div style="position:absolute;left:1536.00px;top:162.00px;width:6.00px;height:26.00px;background:repeating-linear-gradient(90deg,#9A9EA6 0 2px,transparent 2px 4px);-webkit-mask-image:repeating-linear-gradient(#000 0 2px,transparent 2px 4px)"></div>
<div class="t" style="left:1548.00px;top:163.28px;font-size:24px;color:#343741;font-weight:400;letter-spacing:0.69px">crowdstrike.falcon</div>
<div style="position:absolute;left:1896.00px;top:162.00px;width:6.00px;height:26.00px;background:repeating-linear-gradient(90deg,#9A9EA6 0 2px,transparent 2px 4px);-webkit-mask-image:repeating-linear-gradient(#000 0 2px,transparent 2px 4px)"></div>
<div class="t" style="left:1908.00px;top:163.28px;font-size:24px;color:#343741;font-weight:400;letter-spacing:0.5px">malware_ransomware</div>
<div style="position:absolute;left:2256.00px;top:162.00px;width:6.00px;height:26.00px;background:repeating-linear-gradient(90deg,#9A9EA6 0 2px,transparent 2px 4px);-webkit-mask-image:repeating-linear-gradient(#000 0 2px,transparent 2px 4px)"></div>
<div class="t" style="left:2268.40px;top:163.28px;font-size:24px;color:#343741;font-weight:400;letter-spacing:0.5px">alice</div>
<div style="position:absolute;left:2616.00px;top:162.00px;width:6.00px;height:26.00px;background:repeating-linear-gradient(90deg,#9A9EA6 0 2px,transparent 2px 4px);-webkit-mask-image:repeating-linear-gradient(#000 0 2px,transparent 2px 4px)"></div>
<div class="t" style="left:2627.60px;top:163.28px;font-size:24px;color:#2B6CB3;font-weight:400;letter-spacing:-0.7px">192.168.12.51</div>
<div style="position:absolute;left:2976.00px;top:162.00px;width:6.00px;height:26.00px;background:repeating-linear-gradient(90deg,#9A9EA6 0 2px,transparent 2px 4px);-webkit-mask-image:repeating-linear-gradient(#000 0 2px,transparent 2px 4px)"></div>
<div style="position:absolute;left:2987.00px;top:175.00px;width:24.00px;height:2.00px;background:#343741"></div>
<div style="position:absolute;left:0.00px;top:274.00px;width:3008.00px;height:2.00px;background:#D3D7E2"></div>
<svg style="position:absolute;left:25px;top:230.00px" width="14" height="24" viewBox="0 0 14 24"><path d="M1.5 1l11 11-11 11" fill="none" stroke="#2B6CB3" stroke-width="2"/></svg>
<div style="position:absolute;left:76.00px;top:228.00px;width:6.00px;height:26.00px;background:repeating-linear-gradient(90deg,#9A9EA6 0 2px,transparent 2px 4px);-webkit-mask-image:repeating-linear-gradient(#000 0 2px,transparent 2px 4px)"></div>
<div class="t" style="left:89.00px;top:229.28px;font-size:24px;color:#343741;font-weight:400;letter-spacing:0.4px">Feb 13, 2020 @ 08:50:20.289</div>
<div class="t" style="left:452.75px;top:229.28px;font-size:24px;color:#343741;font-weight:400;letter-spacing:0.69px">CrowdStrike Authentication</div>
<div style="position:absolute;left:812.00px;top:241.00px;width:24.00px;height:2.00px;background:#98A2B3"></div>
<div style="position:absolute;left:1176.00px;top:228.00px;width:6.00px;height:26.00px;background:repeating-linear-gradient(90deg,#9A9EA6 0 2px,transparent 2px 4px);-webkit-mask-image:repeating-linear-gradient(#000 0 2px,transparent 2px 4px)"></div>
<div class="t" style="left:1188.60px;top:229.28px;font-size:24px;color:#343741;font-weight:400;letter-spacing:0.76px">crowdstrike</div>
<div style="position:absolute;left:1536.00px;top:228.00px;width:6.00px;height:26.00px;background:repeating-linear-gradient(90deg,#9A9EA6 0 2px,transparent 2px 4px);-webkit-mask-image:repeating-linear-gradient(#000 0 2px,transparent 2px 4px)"></div>
<div class="t" style="left:1548.00px;top:229.28px;font-size:24px;color:#343741;font-weight:400;letter-spacing:0.69px">crowdstrike.falcon</div>
<div style="position:absolute;left:1896.00px;top:228.00px;width:6.00px;height:26.00px;background:repeating-linear-gradient(90deg,#9A9EA6 0 2px,transparent 2px 4px);-webkit-mask-image:repeating-linear-gradient(#000 0 2px,transparent 2px 4px)"></div>
<div class="t" style="left:1908.00px;top:229.28px;font-size:24px;color:#343741;font-weight:400;letter-spacing:0.5px">self_accept_eula</div>
<div style="position:absolute;left:2256.00px;top:228.00px;width:6.00px;height:26.00px;background:repeating-linear-gradient(90deg,#9A9EA6 0 2px,transparent 2px 4px);-webkit-mask-image:repeating-linear-gradient(#000 0 2px,transparent 2px 4px)"></div>
<div class="t" style="left:2268.40px;top:229.28px;font-size:24px;color:#343741;font-weight:400;letter-spacing:0.5px">alice@company.com</div>
<div style="position:absolute;left:2616.00px;top:228.00px;width:6.00px;height:26.00px;background:repeating-linear-gradient(90deg,#9A9EA6 0 2px,transparent 2px 4px);-webkit-mask-image:repeating-linear-gradient(#000 0 2px,transparent 2px 4px)"></div>
<div class="t" style="left:2627.60px;top:229.28px;font-size:24px;color:#2B6CB3;font-weight:400;letter-spacing:-0.4px">192.168.6.8</div>
<div style="position:absolute;left:2976.00px;top:228.00px;width:6.00px;height:26.00px;background:repeating-linear-gradient(90deg,#9A9EA6 0 2px,transparent 2px 4px);-webkit-mask-image:repeating-linear-gradient(#000 0 2px,transparent 2px 4px)"></div>
<div style="position:absolute;left:2987.00px;top:241.00px;width:24.00px;height:2.00px;background:#343741"></div>
<div style="position:absolute;left:0.00px;top:340.00px;width:3008.00px;height:2.00px;background:#D3D7E2"></div>
<svg style="position:absolute;left:25px;top:296.00px" width="14" height="24" viewBox="0 0 14 24"><path d="M1.5 1l11 11-11 11" fill="none" stroke="#2B6CB3" stroke-width="2"/></svg>
<div style="position:absolute;left:76.00px;top:294.00px;width:6.00px;height:26.00px;background:repeating-linear-gradient(90deg,#9A9EA6 0 2px,transparent 2px 4px);-webkit-mask-image:repeating-linear-gradient(#000 0 2px,transparent 2px 4px)"></div>
<div class="t" style="left:89.00px;top:295.28px;font-size:24px;color:#343741;font-weight:400;letter-spacing:0.4px">Feb 13, 2020 @ 08:50:14.754</div>
<div class="t" style="left:452.75px;top:295.28px;font-size:24px;color:#343741;font-weight:400;letter-spacing:0.69px">CrowdStrike Authentication</div>
<div style="position:absolute;left:812.00px;top:307.00px;width:24.00px;height:2.00px;background:#98A2B3"></div>
<div style="position:absolute;left:1176.00px;top:294.00px;width:6.00px;height:26.00px;background:repeating-linear-gradient(90deg,#9A9EA6 0 2px,transparent 2px 4px);-webkit-mask-image:repeating-linear-gradient(#000 0 2px,transparent 2px 4px)"></div>
<div class="t" style="left:1188.60px;top:295.28px;font-size:24px;color:#343741;font-weight:400;letter-spacing:0.76px">crowdstrike</div>
<div style="position:absolute;left:1536.00px;top:294.00px;width:6.00px;height:26.00px;background:repeating-linear-gradient(90deg,#9A9EA6 0 2px,transparent 2px 4px);-webkit-mask-image:repeating-linear-gradient(#000 0 2px,transparent 2px 4px)"></div>
<div class="t" style="left:1548.00px;top:295.28px;font-size:24px;color:#343741;font-weight:400;letter-spacing:0.69px">crowdstrike.falcon</div>
<div style="position:absolute;left:1896.00px;top:294.00px;width:6.00px;height:26.00px;background:repeating-linear-gradient(90deg,#9A9EA6 0 2px,transparent 2px 4px);-webkit-mask-image:repeating-linear-gradient(#000 0 2px,transparent 2px 4px)"></div>
<div class="t" style="left:1908.00px;top:295.28px;font-size:24px;color:#343741;font-weight:400;letter-spacing:0.5px">two_factor_authenticate</div>
<div style="position:absolute;left:2256.00px;top:294.00px;width:6.00px;height:26.00px;background:repeating-linear-gradient(90deg,#9A9EA6 0 2px,transparent 2px 4px);-webkit-mask-image:repeating-linear-gradient(#000 0 2px,transparent 2px 4px)"></div>
<div class="t" style="left:2268.40px;top:295.28px;font-size:24px;color:#343741;font-weight:400;letter-spacing:0.5px">alice@company.com</div>
<div style="position:absolute;left:2616.00px;top:294.00px;width:6.00px;height:26.00px;background:repeating-linear-gradient(90deg,#9A9EA6 0 2px,transparent 2px 4px);-webkit-mask-image:repeating-linear-gradient(#000 0 2px,transparent 2px 4px)"></div>
<div class="t" style="left:2627.60px;top:295.28px;font-size:24px;color:#2B6CB3;font-weight:400;letter-spacing:-0.4px">192.168.6.8</div>
<div style="position:absolute;left:2976.00px;top:294.00px;width:6.00px;height:26.00px;background:repeating-linear-gradient(90deg,#9A9EA6 0 2px,transparent 2px 4px);-webkit-mask-image:repeating-linear-gradient(#000 0 2px,transparent 2px 4px)"></div>
<div style="position:absolute;left:2987.00px;top:307.00px;width:24.00px;height:2.00px;background:#343741"></div>
<div style="position:absolute;left:0.00px;top:406.00px;width:3008.00px;height:2.00px;background:#D3D7E2"></div>
<svg style="position:absolute;left:25px;top:362.00px" width="14" height="24" viewBox="0 0 14 24"><path d="M1.5 1l11 11-11 11" fill="none" stroke="#2B6CB3" stroke-width="2"/></svg>
<div style="position:absolute;left:76.00px;top:360.00px;width:6.00px;height:26.00px;background:repeating-linear-gradient(90deg,#9A9EA6 0 2px,transparent 2px 4px);-webkit-mask-image:repeating-linear-gradient(#000 0 2px,transparent 2px 4px)"></div>
<div class="t" style="left:89.00px;top:361.28px;font-size:24px;color:#343741;font-weight:400;letter-spacing:0.4px">Feb 13, 2020 @ 08:46:12.362</div>
<div class="t" style="left:452.75px;top:361.28px;font-size:24px;color:#343741;font-weight:400;letter-spacing:0.69px">CrowdStrike Authentication</div>
<div style="position:absolute;left:812.00px;top:373.00px;width:24.00px;height:2.00px;background:#98A2B3"></div>
<div style="position:absolute;left:1176.00px;top:360.00px;width:6.00px;height:26.00px;background:repeating-linear-gradient(90deg,#9A9EA6 0 2px,transparent 2px 4px);-webkit-mask-image:repeating-linear-gradient(#000 0 2px,transparent 2px 4px)"></div>
<div class="t" style="left:1188.60px;top:361.28px;font-size:24px;color:#343741;font-weight:400;letter-spacing:0.76px">crowdstrike</div>
<div style="position:absolute;left:1536.00px;top:360.00px;width:6.00px;height:26.00px;background:repeating-linear-gradient(90deg,#9A9EA6 0 2px,transparent 2px 4px);-webkit-mask-image:repeating-linear-gradient(#000 0 2px,transparent 2px 4px)"></div>
<div class="t" style="left:1548.00px;top:361.28px;font-size:24px;color:#343741;font-weight:400;letter-spacing:0.69px">crowdstrike.falcon</div>
<div style="position:absolute;left:1896.00px;top:360.00px;width:6.00px;height:26.00px;background:repeating-linear-gradient(90deg,#9A9EA6 0 2px,transparent 2px 4px);-webkit-mask-image:repeating-linear-gradient(#000 0 2px,transparent 2px 4px)"></div>
<div class="t" style="left:1908.00px;top:361.28px;font-size:24px;color:#343741;font-weight:400;letter-spacing:0.5px">user_authenticate</div>
<div style="position:absolute;left:2256.00px;top:360.00px;width:6.00px;height:26.00px;background:repeating-linear-gradient(90deg,#9A9EA6 0 2px,transparent 2px 4px);-webkit-mask-image:repeating-linear-gradient(#000 0 2px,transparent 2px 4px)"></div>
<div class="t" style="left:2268.40px;top:361.28px;font-size:24px;color:#343741;font-weight:400;letter-spacing:0.5px">alice@company.com</div>
<div style="position:absolute;left:2616.00px;top:360.00px;width:6.00px;height:26.00px;background:repeating-linear-gradient(90deg,#9A9EA6 0 2px,transparent 2px 4px);-webkit-mask-image:repeating-linear-gradient(#000 0 2px,transparent 2px 4px)"></div>
<div class="t" style="left:2627.60px;top:361.28px;font-size:24px;color:#2B6CB3;font-weight:400;letter-spacing:-0.4px">192.168.6.8</div>
<div style="position:absolute;left:2976.00px;top:360.00px;width:6.00px;height:26.00px;background:repeating-linear-gradient(90deg,#9A9EA6 0 2px,transparent 2px 4px);-webkit-mask-image:repeating-linear-gradient(#000 0 2px,transparent 2px 4px)"></div>
<div style="position:absolute;left:2987.00px;top:373.00px;width:24.00px;height:2.00px;background:#343741"></div>
<svg style="position:absolute;left:25px;top:428.00px" width="14" height="24" viewBox="0 0 14 24"><path d="M1.5 1l11 11-11 11" fill="none" stroke="#2B6CB3" stroke-width="2"/></svg>
<div style="position:absolute;left:76.00px;top:426.00px;width:6.00px;height:26.00px;background:repeating-linear-gradient(90deg,#9A9EA6 0 2px,transparent 2px 4px);-webkit-mask-image:repeating-linear-gradient(#000 0 2px,transparent 2px 4px)"></div>
<div class="t" style="left:89.00px;top:427.28px;font-size:24px;color:#343741;font-weight:400;letter-spacing:0.4px">Feb 13, 2020 @ 08:45:20.236</div>
<div class="t" style="left:452.75px;top:427.28px;font-size:24px;color:#343741;font-weight:400;letter-spacing:0.69px">CrowdStrike Authentication</div>
<div style="position:absolute;left:812.00px;top:439.00px;width:24.00px;height:2.00px;background:#98A2B3"></div>
<div style="position:absolute;left:1176.00px;top:426.00px;width:6.00px;height:26.00px;background:repeating-linear-gradient(90deg,#9A9EA6 0 2px,transparent 2px 4px);-webkit-mask-image:repeating-linear-gradient(#000 0 2px,transparent 2px 4px)"></div>
<div class="t" style="left:1188.60px;top:427.28px;font-size:24px;color:#343741;font-weight:400;letter-spacing:0.76px">crowdstrike</div>
<div style="position:absolute;left:1536.00px;top:426.00px;width:6.00px;height:26.00px;background:repeating-linear-gradient(90deg,#9A9EA6 0 2px,transparent 2px 4px);-webkit-mask-image:repeating-linear-gradient(#000 0 2px,transparent 2px 4px)"></div>
<div class="t" style="left:1548.00px;top:427.28px;font-size:24px;color:#343741;font-weight:400;letter-spacing:0.69px">crowdstrike.falcon</div>
<div style="position:absolute;left:1896.00px;top:426.00px;width:6.00px;height:26.00px;background:repeating-linear-gradient(90deg,#9A9EA6 0 2px,transparent 2px 4px);-webkit-mask-image:repeating-linear-gradient(#000 0 2px,transparent 2px 4px)"></div>
<div class="t" style="left:1908.00px;top:427.28px;font-size:24px;color:#343741;font-weight:400;letter-spacing:0.5px">change_password</div>
<div style="position:absolute;left:2256.00px;top:426.00px;width:6.00px;height:26.00px;background:repeating-linear-gradient(90deg,#9A9EA6 0 2px,transparent 2px 4px);-webkit-mask-image:repeating-linear-gradient(#000 0 2px,transparent 2px 4px)"></div>
<div class="t" style="left:2268.40px;top:427.28px;font-size:24px;color:#343741;font-weight:400;letter-spacing:0.5px">alice@company.com</div>
<div style="position:absolute;left:2616.00px;top:426.00px;width:6.00px;height:26.00px;background:repeating-linear-gradient(90deg,#9A9EA6 0 2px,transparent 2px 4px);-webkit-mask-image:repeating-linear-gradient(#000 0 2px,transparent 2px 4px)"></div>
<div class="t" style="left:2627.60px;top:427.28px;font-size:24px;color:#2B6CB3;font-weight:400;letter-spacing:-0.4px">192.168.6.8</div>
<div style="position:absolute;left:2976.00px;top:426.00px;width:6.00px;height:26.00px;background:repeating-linear-gradient(90deg,#9A9EA6 0 2px,transparent 2px 4px);-webkit-mask-image:repeating-linear-gradient(#000 0 2px,transparent 2px 4px)"></div>
<div style="position:absolute;left:2987.00px;top:439.00px;width:24.00px;height:2.00px;background:#343741"></div>
</div>
<div style="position:absolute;left:1230.00px;top:1680.00px;width:840.00px;height:96.00px;background:radial-gradient(ellipse 420px 110px at 50% 115%,rgba(0,0,0,0.075),rgba(0,0,0,0.03) 60%,rgba(0,0,0,0) 100%)"></div>
</body></html>
